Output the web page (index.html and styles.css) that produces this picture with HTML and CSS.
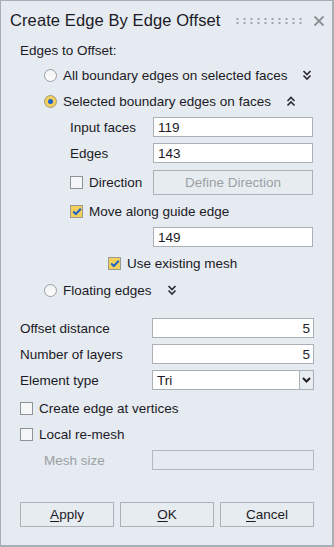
FILE: index.html
```html
<!DOCTYPE html>
<html>
<head>
    <title>Create Edge By Edge Offset</title>
    <meta charset="utf-8">
    <link rel="stylesheet" href="styles.css">
</head>
<body>
<div class="dialog">
    <div class="titlebar">
        <span class="title">Create Edge By Edge Offset</span>
        <span class="grip"></span>
        <svg class="close" width="12" height="12" viewBox="0 0 12 12"><path d="M1.5 1.5L10.5 10.5M10.5 1.5L1.5 10.5" stroke="#8d9297" stroke-width="1.8"/></svg>
    </div>

    <div class="content">
        <div class="row heading">Edges to Offset:</div>

        <div class="row lvl1">
            <span class="radio"></span>
            <span class="lbl">All boundary edges on selected faces</span>
            <svg class="chev" width="10" height="12" viewBox="0 0 10 12"><path d="M1.5 2L5 5.5L8.5 2M1.5 6.5L5 10L8.5 6.5" fill="none" stroke="#2a2a33" stroke-width="1.6"/></svg>
        </div>
        <div class="row lvl1">
            <span class="radio on"></span>
            <span class="lbl">Selected boundary edges on faces</span>
            <svg class="chev" width="10" height="12" viewBox="0 0 10 12"><path d="M1.5 6L5 2.5L8.5 6M1.5 10.5L5 7L8.5 10.5" fill="none" stroke="#2a2a33" stroke-width="1.6"/></svg>
        </div>

        <div class="row lvl2 field">
            <span class="name">Input faces</span>
            <span class="box">119</span>
        </div>
        <div class="row lvl2 field">
            <span class="name">Edges</span>
            <span class="box">143</span>
        </div>
        <div class="row lvl2 field tall">
            <span class="name"><span class="check"></span>Direction</span>
            <span class="btn wide disabled">Define Direction</span>
        </div>
        <div class="row lvl2 gap2">
            <span class="check on"><svg width="10" height="9" viewBox="0 0 10 9"><path d="M1.2 4.6L3.8 7L8.8 1.8" fill="none" stroke="#1e63c8" stroke-width="2"/></svg></span>
            <span class="lbl">Move along guide edge</span>
        </div>
        <div class="row lvl2 field">
            <span class="name"></span>
            <span class="box">149</span>
        </div>
        <div class="row lvl3">
            <span class="check on"><svg width="10" height="9" viewBox="0 0 10 9"><path d="M1.2 4.6L3.8 7L8.8 1.8" fill="none" stroke="#1e63c8" stroke-width="2"/></svg></span>
            <span class="lbl">Use existing mesh</span>
        </div>
        <div class="row lvl1 gap1">
            <span class="radio"></span>
            <span class="lbl">Floating edges</span>
            <svg class="chev" width="10" height="12" viewBox="0 0 10 12"><path d="M1.5 2L5 5.5L8.5 2M1.5 6.5L5 10L8.5 6.5" fill="none" stroke="#2a2a33" stroke-width="1.6"/></svg>
        </div>

        <div class="row field main first">
            <span class="name">Offset distance</span>
            <span class="box num">5</span>
        </div>
        <div class="row field main">
            <span class="name">Number of layers</span>
            <span class="box num">5</span>
        </div>
        <div class="row field main">
            <span class="name">Element type</span>
            <span class="select">
                <span class="value">Tri</span>
                <span class="arrow"><svg width="9" height="6" viewBox="0 0 9 6"><path d="M1 1L4.5 4.5L8 1" fill="none" stroke="#222" stroke-width="2"/></svg></span>
            </span>
        </div>
        <div class="row gap2">
            <span class="check"></span>
            <span class="lbl">Create edge at vertices</span>
        </div>
        <div class="row">
            <span class="check"></span>
            <span class="lbl">Local re-mesh</span>
        </div>
        <div class="row field main">
            <span class="name off">Mesh size</span>
            <span class="box disabled"></span>
        </div>

        <div class="buttons">
            <span class="btn"><u>A</u>pply</span>
            <span class="btn"><u>O</u>K</span>
            <span class="btn"><u>C</u>ancel</span>
        </div>
    </div>
</div>
</body>
</html>
```

FILE: styles.css
```css
html,body{margin:0;padding:0;background:#e5ebf0;}
body{font-family:"Liberation Sans",Arial,sans-serif;font-size:13.5px;color:#1c1a26;}

.dialog{width:334px;height:547px;box-sizing:border-box;border:1px solid #a7aeb4;border-right-width:2px;border-bottom-width:2px;background:#e5ebf0;}

.titlebar{height:37px;display:flex;align-items:center;padding:1px 0 0 9px;}
.title{font-size:16.5px;color:#1c1a26;letter-spacing:0.1px;}
.grip{width:70px;height:8px;margin-left:13px;background-image:radial-gradient(circle,#9da2a7 0.9px,transparent 1.3px);background-size:7px 4px;background-position:0 0;}
.close{margin-left:9px;}

.content{padding:0 18px 0 19px;}

.row{height:26px;display:flex;align-items:center;}
.heading{height:23px;}
.lvl1{padding-left:24px;}
.lvl2{padding-left:50px;}
.lvl3{padding-left:88px;}
.gap1{margin-top:1px;}
.gap2{margin-top:2px;}
.tall{height:28px;margin-top:2px;}

.lbl{margin-left:6px;}
.chev{margin-left:15px;}

.radio{width:11px;height:11px;border:1px solid #9aa0a6;border-radius:50%;background:linear-gradient(#f2f3f4,#fdfdfd);position:relative;flex:none;}
.radio.on{background:#f3cf5c;border-color:#a39a7c;}
.radio.on::after{content:"";position:absolute;left:3px;top:3px;width:5px;height:5px;border-radius:50%;background:#1e63c8;}

.check{width:11px;height:11px;border:1px solid #8e9398;background:#f4f6f7;display:inline-flex;align-items:center;justify-content:center;flex:none;}
.check.on{background:#f3cf5c;border-color:#9a9a90;}
.field .name .check{margin-right:6px;}

.field .name{width:83px;flex:none;display:flex;align-items:center;}
.field.main .name{width:132px;}
.name.off{padding-left:24px;width:108px !important;color:#9b9fa4;}

.box{width:160px;height:20px;box-sizing:border-box;border:1px solid #aab0b6;background:#fff;padding:0 4px;display:flex;align-items:center;}
.main .box{width:163px;}
.box.num{justify-content:flex-end;padding-right:3px;}
.box.disabled{background:transparent;border-color:#b4b9be;}
.main.first{margin-top:12px;}

.select{width:163px;height:20px;box-sizing:border-box;border:1px solid #aab0b6;background:#fff;display:flex;}
.select .value{flex:1;padding-left:4px;display:flex;align-items:center;}
.select .arrow{width:13px;border-left:1px solid #aab0b6;background:#e8edf1;display:flex;align-items:center;justify-content:center;}

.btn{height:25px;box-sizing:border-box;border:1px solid #abb1b7;background:#e7ecf0;display:flex;align-items:center;justify-content:center;}
.btn.wide{width:160px;}
.btn.disabled{color:#9ca0a5;}
.buttons{display:grid;grid-template-columns:1fr 1fr 1fr;gap:6px;margin-top:29px;}
.buttons .btn{height:25px;}
u{text-decoration-thickness:1px;text-underline-offset:2px;}
```
